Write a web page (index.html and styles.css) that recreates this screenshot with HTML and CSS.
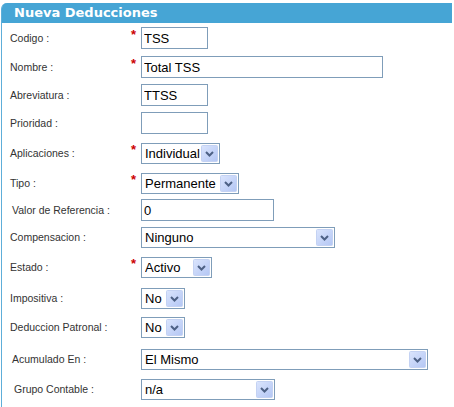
FILE: index.html
```html
<!DOCTYPE html>
<html lang="es">
<head>
<meta charset="utf-8">
<title>Nueva Deducciones</title>
<link rel="stylesheet" href="styles.css">
</head>
<body>
<div class="panel">
  <div class="panel-head">Nueva Deducciones</div>
  <form class="form">
    <div class="row gap-7">
      <label class="lbl">Codigo :</label><span class="req">*</span>
      <input class="txt w-short" type="text" value="TSS">
    </div>
    <div class="row gap-6">
      <label class="lbl">Nombre :</label><span class="req">*</span>
      <input class="txt w-long" type="text" value="Total TSS">
    </div>
    <div class="row gap-6">
      <label class="lbl">Abreviatura :</label><span class="req"></span>
      <input class="txt w-short" type="text" value="TTSS">
    </div>
    <div class="row gap-8">
      <label class="lbl">Prioridad :</label><span class="req"></span>
      <input class="txt w-short" type="text" value="">
    </div>
    <div class="row gap-8">
      <label class="lbl">Aplicaciones :</label><span class="req">*</span>
      <select class="sel w-aplic"><option>Individual</option></select>
    </div>
    <div class="row gap-5">
      <label class="lbl">Tipo :</label><span class="req">*</span>
      <select class="sel w-tipo"><option>Permanente</option></select>
    </div>
    <div class="row gap-5">
      <label class="lbl lbl-in2">Valor de Referencia :</label><span class="req"></span>
      <input class="txt w-valor" type="text" value="0">
    </div>
    <div class="row gap-8">
      <label class="lbl">Compensacion :</label><span class="req"></span>
      <select class="sel w-comp"><option>Ninguno</option></select>
    </div>
    <div class="row gap-9">
      <label class="lbl">Estado :</label><span class="req">*</span>
      <select class="sel w-estado"><option>Activo</option></select>
    </div>
    <div class="row gap-7">
      <label class="lbl">Impositiva :</label><span class="req"></span>
      <select class="sel w-yn"><option>No</option></select>
    </div>
    <div class="row gap-10">
      <label class="lbl">Deduccion Patronal :</label><span class="req"></span>
      <select class="sel w-yn"><option>No</option></select>
    </div>
    <div class="row gap-8">
      <label class="lbl lbl-in2">Acumulado En :</label><span class="req"></span>
      <select class="sel w-acum"><option>El Mismo</option></select>
    </div>
    <div class="row">
      <label class="lbl lbl-in4">Grupo Contable :</label><span class="req"></span>
      <select class="sel w-grupo"><option>n/a</option></select>
    </div>
  </form>
</div>
</body>
</html>
```

FILE: styles.css
```css
html, body {
  margin: 0;
  padding: 0;
  background: #ffffff;
}

body {
  font-family: "Liberation Sans", Arial, sans-serif;
  height: 407px;
  overflow: hidden;
}

.panel {
  margin: 3px 2px 0 1px;
  border-left: 1px solid #5eaed9;
  border-top-left-radius: 6px;
  height: 404px;
}

.panel-head {
  background: #46a5d5;
  color: #ffffff;
  font-family: "DejaVu Sans", Verdana, sans-serif;
  font-weight: bold;
  font-size: 13px;
  line-height: 20px;
  height: 20px;
  padding-left: 12px;
  border-top-left-radius: 5px;
}

.form {
  margin: 0;
  padding-top: 4px;
  display: flex;
  flex-direction: column;
}

.row {
  display: grid;
  grid-template-columns: 129px 10px auto;
  align-items: center;
  justify-items: start;
  height: 22px;
}

.gap-5 { margin-bottom: 5px; }
.gap-6 { margin-bottom: 6px; }
.gap-7 { margin-bottom: 7px; }
.gap-8 { margin-bottom: 8px; }
.gap-9 { margin-bottom: 9px; }
.gap-10 { margin-bottom: 10px; }

.lbl {
  font-size: 10.5px;
  color: #333333;
  padding-left: 8px;
  white-space: nowrap;
}

.lbl-in2 { padding-left: 10px; }
.lbl-in4 { padding-left: 12px; }

.req {
  color: #cc0000;
  font-size: 13px;
  font-weight: bold;
  line-height: 13px;
  align-self: start;
  padding-top: 1px;
}

.txt {
  box-sizing: border-box;
  height: 22px;
  border: 1px solid #7f9db9;
  margin: 0;
  padding: 0 2px;
  font-family: "Liberation Sans", Arial, sans-serif;
  font-size: 13px;
  color: #000000;
  background: #ffffff;
  outline: none;
}

.sel {
  box-sizing: border-box;
  height: 21px;
  border: 1px solid #7f9db9;
  border-radius: 0;
  margin: 0;
  padding: 0 18px 0 3px;
  font-family: "Liberation Sans", Arial, sans-serif;
  font-size: 13px;
  color: #000000;
  -webkit-appearance: none;
  appearance: none;
  background-color: #ffffff;
  background-image: url("data:image/svg+xml;utf8,<svg xmlns='http://www.w3.org/2000/svg' width='17' height='17' viewBox='0 0 17 17'><defs><linearGradient id='g' x1='0' y1='0' x2='1' y2='1'><stop offset='0' stop-color='%23dbe5fd'/><stop offset='1' stop-color='%23b3c6f4'/></linearGradient></defs><rect x='0.5' y='0.5' width='16' height='16' rx='1' fill='url(%23g)' stroke='%23c4d2f3'/><polyline points='5,7 8.5,10.5 12,7' fill='none' stroke='%234d6185' stroke-width='2'/></svg>");
  background-repeat: no-repeat;
  background-position: right 1px center;
  background-size: 17px 17px;
}

.w-short { width: 67px; }
.w-long { width: 242px; }
.w-valor { width: 133px; }
.w-aplic { width: 79px; }
.w-tipo { width: 98px; }
.w-comp { width: 194px; }
.w-estado { width: 71px; }
.w-yn { width: 44px; }
.w-acum { width: 287px; }
.w-grupo { width: 134px; }
```
